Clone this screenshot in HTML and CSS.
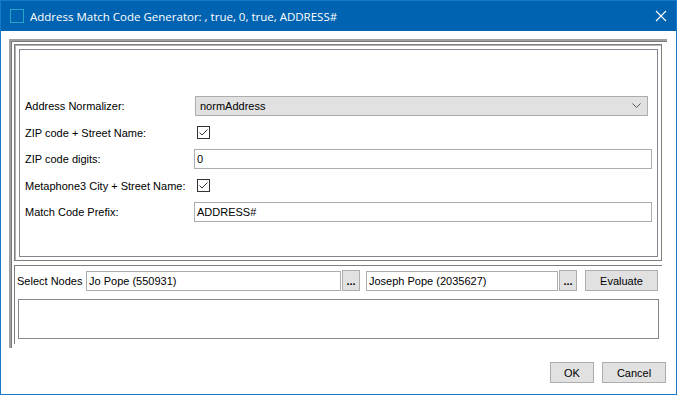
FILE: index.html
```html
<!DOCTYPE html>
<html>
<head>
    <meta charset="utf-8">
    <title>Address Match Code Generator</title>
    <link rel="stylesheet" href="styles.css">
</head>
<body>
    <div class="window">
        <div class="titlebar">
            <svg class="app-icon" width="14" height="14" viewBox="0 0 14 14">
                <rect x="0.5" y="0.5" width="13" height="13" fill="none" stroke="#2aa3c9" />
            </svg>
            <span class="title">Address Match Code Generator: , true, 0, true, ADDRESS#</span>
            <svg class="close" width="12" height="12" viewBox="0 0 12 12">
                <path d="M1 1 L11 11 M11 1 L1 11" stroke="#fff" stroke-width="1.1" />
            </svg>
        </div>

        <div class="content">
            <div class="split">
                <div class="top-panel">
                    <div class="form">
                        <label class="lbl">Address Normalizer:</label>
                        <div class="combo">
                            <span>normAddress</span>
                            <svg width="9" height="6" viewBox="0 0 9 6">
                                <path d="M0.5 0.5 L4.5 4.5 L8.5 0.5" fill="none" stroke="#555" />
                            </svg>
                        </div>

                        <label class="lbl">ZIP code + Street Name:</label>
                        <div class="cell-check">
                            <svg class="check" width="13" height="13" viewBox="0 0 13 13">
                                <rect x="0.5" y="0.5" width="12" height="12" fill="#fff" stroke="#333" />
                                <path d="M2.5 6.5 L5 9 L10.5 3.5" fill="none" stroke="#333" />
                            </svg>
                        </div>

                        <label class="lbl">ZIP code digits:</label>
                        <div class="field">0</div>

                        <label class="lbl">Metaphone3 City + Street Name:</label>
                        <div class="cell-check">
                            <svg class="check" width="13" height="13" viewBox="0 0 13 13">
                                <rect x="0.5" y="0.5" width="12" height="12" fill="#fff" stroke="#333" />
                                <path d="M2.5 6.5 L5 9 L10.5 3.5" fill="none" stroke="#333" />
                            </svg>
                        </div>

                        <label class="lbl">Match Code Prefix:</label>
                        <div class="field">ADDRESS#</div>
                    </div>
                </div>

                <div class="bottom-panel">
                    <div class="nodes">
                        <span class="nodes-lbl">Select Nodes</span>
                        <div class="field node-a">Jo Pope (550931)</div>
                        <div class="btn dots">...</div>
                        <div class="field node-b">Joseph Pope (2035627)</div>
                        <div class="btn dots">...</div>
                        <div class="btn eval">Evaluate</div>
                    </div>
                    <div class="result"></div>
                </div>
            </div>

            <div class="actions">
                <div class="btn ok">OK</div>
                <div class="btn cancel">Cancel</div>
            </div>
        </div>
    </div>
</body>
</html>
```

FILE: styles.css
```css
* {
    box-sizing: border-box;
}

body {
    margin: 0;
    font-family: "Liberation Sans", Arial, sans-serif;
    font-size: 11px;
    color: #000;
}

.window {
    width: 677px;
    height: 395px;
    border: 1px solid #1979ca;
    background: #fff;
    display: flex;
    flex-direction: column;
}

.titlebar {
    height: 30px;
    background: #0063b1;
    display: flex;
    align-items: center;
    color: #fff;
}

.app-icon {
    margin-left: 9px;
    margin-right: 6px;
}

.title {
    font-family: "Open Sans", "Liberation Sans", sans-serif;
    font-size: 11.5px;
    flex: 1;
}

.close {
    margin-right: 9px;
}

.content {
    flex: 1;
    display: flex;
    flex-direction: column;
}

.split {
    margin: 8px 0 0 8px;
    width: 658px;
    height: 309px;
    border-top: 2px solid #a0a0a0;
    border-left: 2px solid #a0a0a0;
    box-shadow: inset 1px 1px 0 #7a7a7a;
    padding: 3px 0 4px 3px;
    display: flex;
    flex-direction: column;
    gap: 4px;
}

.top-panel {
    width: 648px;
    height: 217px;
    border: 1px solid #7e7e7e;
    box-shadow: inset 1px 1px 0 #b4b4b4;
    padding: 4px 3px 3px 4px;
}

.form {
    height: 100%;
    border: 1px solid #828790;
    padding: 46px 5px 0 5px;
    display: grid;
    grid-template-columns: 169px 1fr;
    grid-template-rows: 20px 20px 20px 20px 20px;
    row-gap: 6.5px;
    align-items: center;
}

.lbl {
    white-space: nowrap;
}

.combo {
    height: 20px;
    margin: 0 4px 0 1px;
    background: #e1e1e1;
    border: 1px solid #adadad;
    display: flex;
    align-items: center;
    justify-content: space-between;
    padding: 0 6px 0 4px;
}

.cell-check {
    display: flex;
    align-items: center;
    padding-left: 3px;
}

.check {
    display: block;
}

.field {
    height: 20px;
    border: 1px solid #abadb3;
    background: #fff;
    padding: 0 2px;
    display: flex;
    align-items: center;
    white-space: nowrap;
}

.bottom-panel {
    width: 648px;
    height: 79px;
    border-top: 1px solid #7e7e7e;
    border-left: 1px solid #7e7e7e;
    padding: 4px 2px 4px 2px;
    display: flex;
    flex-direction: column;
    gap: 8px;
}

.nodes {
    display: flex;
    align-items: center;
    height: 21px;
}

.nodes-lbl {
    width: 69px;
}

.node-a {
    width: 255px;
}

.node-b {
    width: 192px;
    margin-left: 6px;
}

.btn {
    height: 21px;
    background: #e1e1e1;
    border: 1px solid #adadad;
    display: flex;
    align-items: center;
    justify-content: center;
}

.dots {
    width: 18px;
    margin-left: 1px;
    font-weight: bold;
    align-items: flex-end;
    padding-bottom: 3px;
    line-height: 1;
}

.eval {
    width: 73px;
    margin-left: 8px;
}

.result {
    height: 40px;
    width: 641px;
    margin-left: 1px;
    border: 1px solid #828790;
}

.actions {
    display: flex;
    justify-content: flex-end;
    gap: 8px;
    margin-top: 14px;
    padding-right: 10px;
}

.ok {
    width: 44px;
}

.cancel {
    width: 64px;
}
```
